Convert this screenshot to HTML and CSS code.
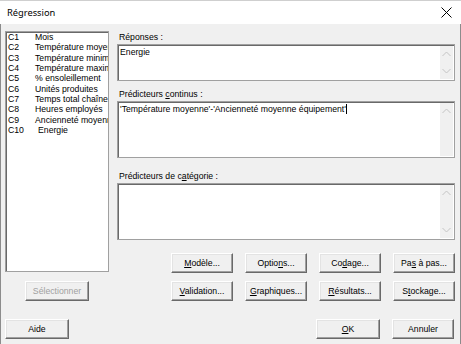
FILE: index.html
```html
<!DOCTYPE html>
<html>
  <head>
    <meta charset="UTF-8">
    <title>Régression</title>
    <link rel="stylesheet" href="styles.css">
  </head>

  <body>
    <div class="window">
      <div class="titlebar">
        <span class="title">Régression</span>
        <svg class="close" width="11" height="11" viewBox="0 0 11 11">
          <path d="M0.5 0.5 L10.5 10.5 M10.5 0.5 L0.5 10.5" stroke="#000" stroke-width="1" fill="none"/>
        </svg>
      </div>

      <div class="dialog">
        <div class="left">
          <div class="listbox">
            <div class="item"><span class="col">C1</span>Mois</div>
            <div class="item"><span class="col">C2</span>Température moyenne</div>
            <div class="item"><span class="col">C3</span>Température minimale</div>
            <div class="item"><span class="col">C4</span>Température maximale</div>
            <div class="item"><span class="col">C5</span>% ensoleillement</div>
            <div class="item"><span class="col">C6</span>Unités produites</div>
            <div class="item"><span class="col">C7</span>Temps total chaîne</div>
            <div class="item"><span class="col">C8</span>Heures employés</div>
            <div class="item"><span class="col">C9</span>Ancienneté moyenne</div>
            <div class="item"><span class="col col-wide">C10</span>Energie</div>
          </div>
          <button class="btn btn-select" disabled>Sélectionner</button>
        </div>

        <div class="right">
          <label class="field-label">Réponses :</label>
          <div class="textbox textbox-small">
            <div class="textbox-text">Energie</div>
            <div class="scroll">
              <svg width="9" height="6" viewBox="0 0 9 6"><path d="M0.5 5 L4.5 1 L8.5 5" stroke="#c4c4c4" fill="none"/></svg>
              <svg width="9" height="6" viewBox="0 0 9 6"><path d="M0.5 1 L4.5 5 L8.5 1" stroke="#c4c4c4" fill="none"/></svg>
            </div>
          </div>

          <label class="field-label">Prédicteurs <u>c</u>ontinus :</label>
          <div class="textbox">
            <div class="textbox-text">'Température moyenne'-'Ancienneté moyenne équipement'<span class="caret"></span></div>
            <div class="scroll scroll-top">
              <svg width="9" height="6" viewBox="0 0 9 6"><path d="M0.5 5 L4.5 1 L8.5 5" stroke="#c4c4c4" fill="none"/></svg>
            </div>
          </div>

          <label class="field-label">Prédicteurs de c<u>a</u>tégorie :</label>
          <div class="textbox">
            <div class="textbox-text"></div>
            <div class="scroll">
              <svg width="9" height="6" viewBox="0 0 9 6"><path d="M0.5 5 L4.5 1 L8.5 5" stroke="#c4c4c4" fill="none"/></svg>
              <svg width="9" height="6" viewBox="0 0 9 6"><path d="M0.5 1 L4.5 5 L8.5 1" stroke="#c4c4c4" fill="none"/></svg>
            </div>
          </div>

          <div class="buttons">
            <button class="btn"><u>M</u>odèle...</button>
            <button class="btn">Optio<u>n</u>s...</button>
            <button class="btn">Co<u>d</u>age...</button>
            <button class="btn">Pa<u>s</u> à pas...</button>
            <button class="btn"><u>V</u>alidation...</button>
            <button class="btn"><u>G</u>raphiques...</button>
            <button class="btn"><u>R</u>ésultats...</button>
            <button class="btn">S<u>t</u>ockage...</button>
          </div>
        </div>
      </div>

      <div class="footer">
        <button class="btn">Aide</button>
        <div class="footer-right">
          <button class="btn"><u>O</u>K</button>
          <button class="btn">Annuler</button>
        </div>
      </div>
    </div>
  </body>
</html>
```

FILE: styles.css
```css
* {
  box-sizing: border-box;
}

body {
  margin: 0;
  font-family: "Liberation Sans", Arial, sans-serif;
  font-size: 8.7px;
  color: #000;
}

.window {
  width: 461px;
  height: 344px;
  background: #f0f0f0;
  border-left: 1px solid #8c8c8c;
  border-right: 1px solid #8c8c8c;
  display: flex;
  flex-direction: column;
}

.titlebar {
  height: 24px;
  background: #fff;
  display: flex;
  align-items: center;
  justify-content: space-between;
  padding: 0 9px 0 7px;
  margin: 0 -1px;
  border-top: 1px solid #cfcfcf;
}

.title {
  font-family: "Noto Sans", "Open Sans", sans-serif;
  font-size: 9.3px;
  color: #000;
}

.close {
  display: block;
}

.dialog {
  display: flex;
  gap: 8px;
  padding: 7px 4px 0 4px;
}

.left {
  width: 104px;
  display: flex;
  flex-direction: column;
  align-items: center;
}

.listbox {
  width: 104px;
  height: 241px;
  background: #fff;
  border: 1px solid #a0a0a0;
  box-shadow: inset 1px 1px #696969;
  padding: 0 2px;
  overflow: hidden;
  white-space: nowrap;
}

.item {
  line-height: 10.35px;
  height: 10.35px;
}

.col {
  display: inline-block;
  width: 27px;
}

.col-wide {
  width: 30px;
}

.right {
  width: 338px;
  display: flex;
  flex-direction: column;
}

.field-label {
  display: block;
  height: 13px;
  line-height: 12px;
  padding-left: 2px;
}

.textbox {
  height: 57px;
  background: #fff;
  border: 1px solid #a0a0a0;
  box-shadow: inset 1px 1px #696969;
  display: flex;
  margin-bottom: 12px;
}

.textbox-small {
  height: 37px;
  margin-bottom: 7px;
}

.textbox-text {
  flex: 1;
  padding: 2px 2px;
  white-space: nowrap;
  overflow: hidden;
}

.caret {
  display: inline-block;
  width: 1px;
  height: 10px;
  background: #000;
  vertical-align: -2px;
}

.scroll {
  width: 13px;
  margin: 1px 1px 1px 0;
  background: #f0f0f0;
  display: flex;
  flex-direction: column;
  align-items: center;
  justify-content: space-between;
  padding: 5px 0 5px;
}

.scroll-top {
  justify-content: flex-start;
}

.buttons {
  display: grid;
  grid-template-columns: repeat(4, 62px);
  column-gap: 12px;
  row-gap: 8px;
  justify-content: end;
  margin-top: 1px;
}

.btn {
  height: 20px;
  width: 62px;
  padding: 0;
  font-family: "Liberation Sans", Arial, sans-serif;
  font-size: 8.7px;
  color: #000;
  background: #f0f0f0;
  border: 1px solid;
  border-color: #fff #696969 #696969 #fff;
  box-shadow: inset -1px -1px #a0a0a0, inset 1px 1px #e3e3e3;
}

.btn:disabled {
  color: #a0a0a0;
}

.btn-select {
  width: 64px;
  margin-top: 9px;
}

.footer {
  display: flex;
  justify-content: space-between;
  padding: 18px 6px 0 4px;
}

.footer .btn:first-child {
  width: 64px;
}

.footer-right {
  display: flex;
  gap: 12px;
}
```
